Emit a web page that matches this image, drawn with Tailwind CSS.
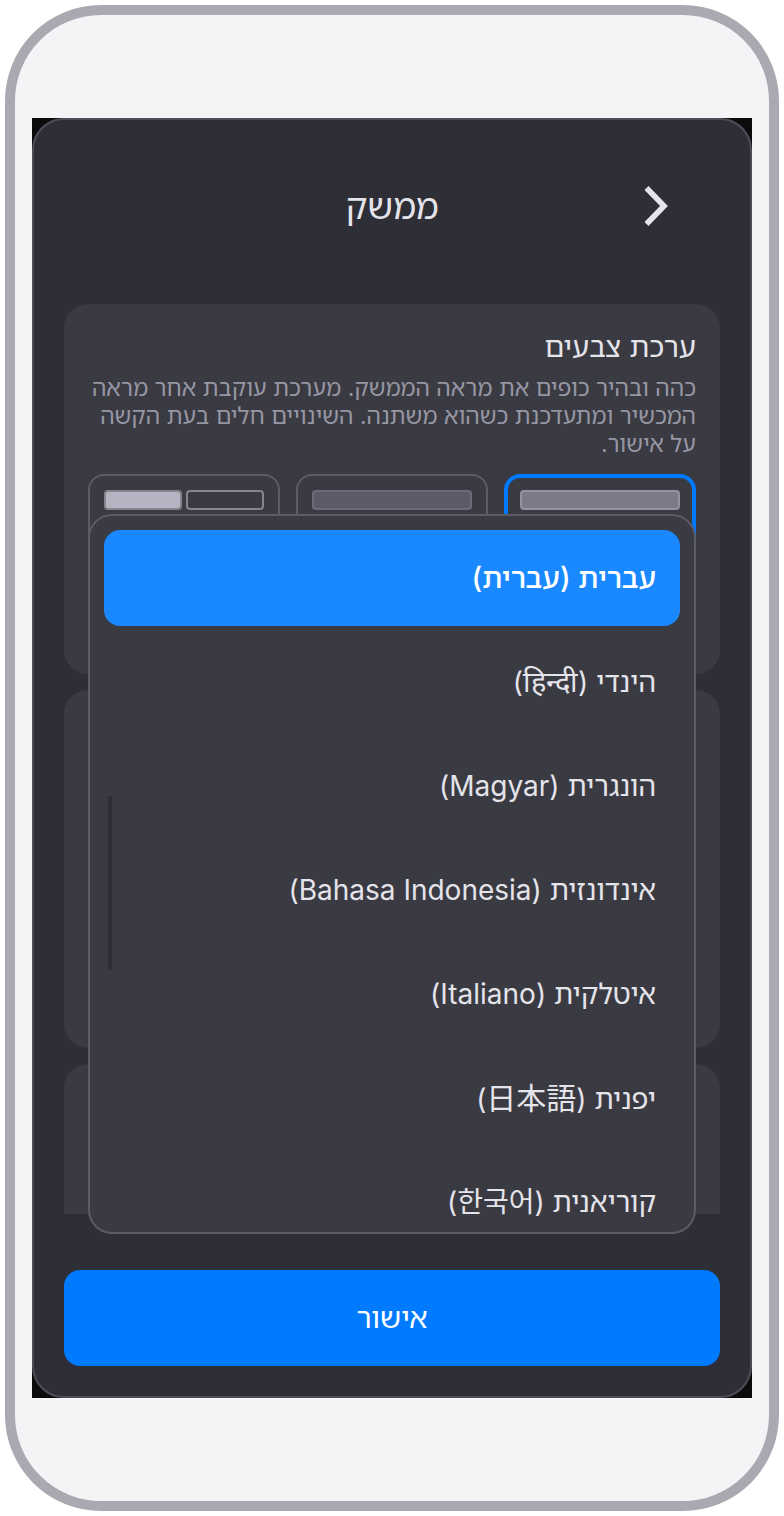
<!DOCTYPE html>
<html lang="he" dir="rtl">
  <head>
    <meta charset="UTF-8" />
    <meta name="viewport" content="width=device-width, initial-scale=1.0" />
    <script src="https://cdn.jsdelivr.net/npm/@tailwindcss/browser@4"></script>
    <title>ממשק</title>
  </head>
  <body class="bg-white p-[5px] font-['Inter','Noto_Sans_Hebrew','Open_Sans','Noto_Sans_CJK_JP',sans-serif]">
    <div class="rounded-[96px] border-10 border-[#a9a9b2] bg-[#f4f4f7] px-[17px] py-[103px]">
      <div class="bg-[#0c0c0d]">
        <div class="flex flex-col rounded-[32px] border-2 border-[#4e4e59] bg-[#2e2e37] px-[30px] pb-[30px] text-[#e4e4ea]">
          <header class="grid h-[184px] grid-cols-[96px_1fr_96px] items-center px-2 pb-3">
            <button type="button" aria-label="חזרה" class="flex size-24 items-center justify-center">
              <svg class="size-12" viewBox="0 0 48 48" fill="none" stroke="currentColor" stroke-width="5.6">
                <path d="M6.5 6L24 24L6.5 42"></path>
              </svg>
            </button>
            <h1 class="text-center text-[35px] leading-[44px]">ממשק</h1>
          </header>

          <main class="relative">
            <div class="flex h-[910px] flex-col gap-4 overflow-hidden">
              <section class="shrink-0 rounded-3xl bg-[#3a3a42] p-6">
                <h2 class="text-[29px] leading-[38px]">ערכת צבעים</h2>
                <p class="mt-2 text-[23px] leading-[28px] text-[#9696a4]">
                  כהה ובהיר כופים את מראה הממשק. מערכת עוקבת אחר מראה המכשיר
                  ומתעדכנת כשהוא משתנה. השינויים חלים בעת הקשה על אישור.
                </p>
                <div class="mt-4 grid grid-cols-3 gap-4">
                  <label class="h-[176px] rounded-2xl border-4 border-[#007aff] p-3">
                    <input type="radio" name="theme" aria-label="כהה" class="sr-only" checked />
                    <span class="block h-5 rounded-sm border-2 border-[#9494a0] bg-[#7c7a87]"></span>
                  </label>
                  <label class="h-[176px] rounded-2xl border-2 border-[#5b5b68] p-[14px]">
                    <input type="radio" name="theme" aria-label="בהיר" class="sr-only" />
                    <span class="block h-5 rounded-sm border-2 border-[#6b6b78] bg-[#5b5b68]"></span>
                  </label>
                  <label class="flex h-[176px] gap-1 rounded-2xl border-2 border-[#5b5b68] p-[14px]">
                    <input type="radio" name="theme" aria-label="מערכת" class="sr-only" />
                    <span class="h-5 flex-1 rounded-sm border-2 border-[#85858d]"></span>
                    <span class="h-5 flex-1 rounded-sm border-2 border-[#85858d] bg-[#b4b4c3]"></span>
                  </label>
                </div>
              </section>
              <section class="h-[358px] shrink-0 rounded-3xl bg-[#3a3a42]"></section>
              <section class="h-[358px] shrink-0 rounded-3xl bg-[#3a3a42]"></section>
            </div>

            <!-- language list -->
            <div
              role="listbox"
              aria-label="שפה"
              class="absolute inset-x-6 top-[210px] flex h-[720px] flex-col gap-2 overflow-hidden rounded-3xl border-2 border-[#5b5b68] bg-[#3a3a42] p-[14px] text-[28px] leading-[36px]"
            >
              <button type="button" role="option" aria-selected="true" class="h-24 shrink-0 rounded-2xl bg-[#1a88ff] px-6 text-start text-[29px] font-medium text-white">עברית (עברית)</button>
              <button type="button" role="option" class="h-24 shrink-0 rounded-2xl px-6 text-start">הינדי (<span lang="hi" class="text-[29px]">हिन्दी</span>)</button>
              <button type="button" role="option" class="h-24 shrink-0 rounded-2xl px-6 text-start">הונגרית (Magyar)</button>
              <button type="button" role="option" class="h-24 shrink-0 rounded-2xl px-6 text-start">אינדונזית (Bahasa Indonesia)</button>
              <button type="button" role="option" class="h-24 shrink-0 rounded-2xl px-6 text-start">איטלקית (Italiano)</button>
              <button type="button" role="option" class="h-24 shrink-0 rounded-2xl px-6 text-start">יפנית (<span lang="ja" class="text-[30px]">日本語</span>)</button>
              <button type="button" role="option" class="h-24 shrink-0 rounded-2xl px-6 text-start">קוריאנית (<span lang="ko">한국어</span>)</button>
              <div class="absolute left-[18px] top-[280px] h-[174px] w-1 bg-[#2e2e37]"></div>
            </div>
          </main>

          <button type="button" class="mt-14 h-24 rounded-2xl bg-[#007aff] text-[29px] leading-[36px] text-white">אישור</button>
        </div>
      </div>
    </div>
  </body>
</html>
